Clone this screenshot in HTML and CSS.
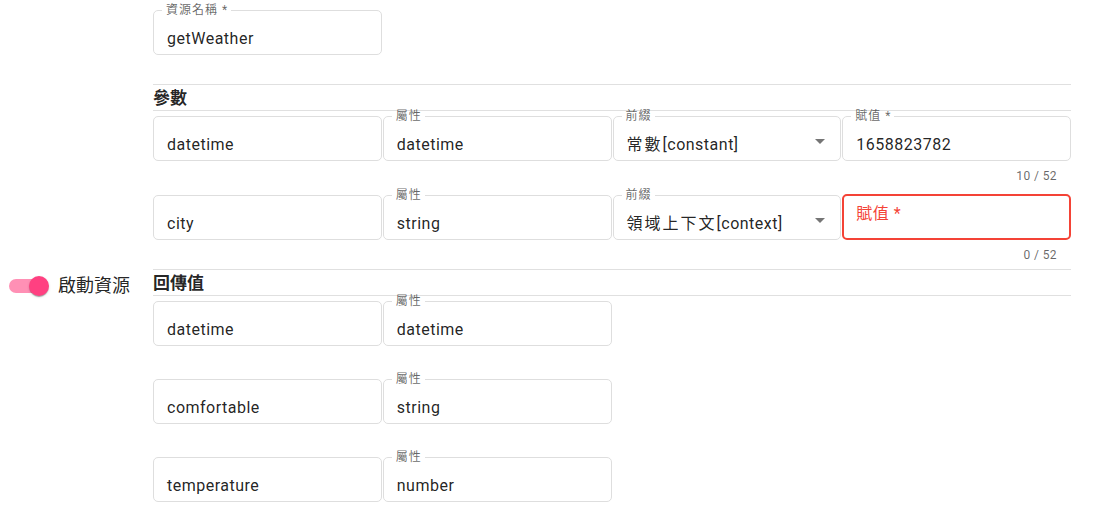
FILE: index.html
```html
<!DOCTYPE html>
<html lang="zh-Hant">
<head>
<meta charset="utf-8">
<title>資源</title>
<link rel="stylesheet" href="styles.css">
</head>
<body>
<div class="page">
  <aside class="side">
    <label class="toggle">
      <span class="switch"><span class="track"></span><span class="thumb"></span></span>
      <span class="toggle-label">啟動資源</span>
    </label>
  </aside>
  <main class="form">
    <div class="grid">
      <div class="field">
        <fieldset class="box"><legend>資源名稱 *</legend><div class="value">getWeather</div></fieldset>
      </div>
    </div>
    <hr class="divider">
    <h2 class="section">參數</h2>
    <div class="grid">
      <div class="field">
        <fieldset class="box"><legend class="none"></legend><div class="value">datetime</div></fieldset>
      </div>
      <div class="field">
        <fieldset class="box"><legend>屬性</legend><div class="value">datetime</div></fieldset>
      </div>
      <div class="field">
        <fieldset class="box"><legend>前綴</legend><div class="value select"><span><span class="cjk">常數</span>[constant]</span><span class="arrow"></span></div></fieldset>
      </div>
      <div class="field">
        <fieldset class="box"><legend>賦值 *</legend><div class="value">1658823782</div></fieldset>
        <div class="hint">10 / 52</div>
      </div>
      <div class="field">
        <fieldset class="box"><legend class="none"></legend><div class="value">city</div></fieldset>
      </div>
      <div class="field">
        <fieldset class="box"><legend>屬性</legend><div class="value">string</div></fieldset>
      </div>
      <div class="field">
        <fieldset class="box"><legend>前綴</legend><div class="value select"><span><span class="cjk">領域上下文</span>[context]</span><span class="arrow"></span></div></fieldset>
      </div>
      <div class="field">
        <fieldset class="box error"><legend class="none"></legend><div class="value placeholder">賦值 *</div></fieldset>
        <div class="hint">0 / 52</div>
      </div>
    </div>
    <hr class="divider">
    <h2 class="section">回傳值</h2>
    <div class="grid returns">
      <div class="field">
        <fieldset class="box"><legend class="none"></legend><div class="value">datetime</div></fieldset>
      </div>
      <div class="field">
        <fieldset class="box"><legend>屬性</legend><div class="value">datetime</div></fieldset>
      </div>
      <div class="field"></div>
      <div class="field"></div>
      <div class="field">
        <fieldset class="box"><legend class="none"></legend><div class="value">comfortable</div></fieldset>
      </div>
      <div class="field">
        <fieldset class="box"><legend>屬性</legend><div class="value">string</div></fieldset>
      </div>
      <div class="field"></div>
      <div class="field"></div>
      <div class="field">
        <fieldset class="box"><legend class="none"></legend><div class="value">temperature</div></fieldset>
      </div>
      <div class="field">
        <fieldset class="box"><legend>屬性</legend><div class="value">number</div></fieldset>
      </div>
    </div>
  </main>
</div>
</body>
</html>
```
FILE: styles.css
```css
html, body {
  margin: 0;
  background: #fff;
}

body {
  font-family: Roboto, "Noto Sans CJK TC", sans-serif;
  color: rgba(0, 0, 0, 0.87);
}

.page {
  display: flex;
  width: 1094px;
  height: 523px;
  overflow: hidden;
}

.side {
  flex: none;
  width: 153px;
  box-sizing: border-box;
  padding-top: 267px;
}

.toggle {
  display: flex;
  align-items: center;
}

.switch {
  position: relative;
  flex: none;
  width: 50px;
  height: 38px;
}

.track {
  position: absolute;
  left: 9px;
  top: 12px;
  width: 35px;
  height: 14px;
  border-radius: 7px;
  background: #ff90b5;
}

.thumb {
  position: absolute;
  left: 29px;
  top: 9px;
  width: 20px;
  height: 20px;
  border-radius: 50%;
  background: #ff4081;
  box-shadow: 0 2px 1px -1px rgba(0, 0, 0, 0.2), 0 1px 1px 0 rgba(0, 0, 0, 0.14), 0 1px 3px 0 rgba(0, 0, 0, 0.12);
}

.toggle-label {
  margin-left: 8px;
  font-size: 18px;
  line-height: 24px;
}

.form {
  flex: none;
  width: 918px;
  padding-top: 5px;
}

.grid {
  display: grid;
  grid-template-columns: repeat(4, 1fr);
  column-gap: 1px;
}

.field {
  height: 79px;
  min-width: 0;
}

.returns .field {
  height: 78px;
}

.box {
  margin: 0;
  min-width: 0;
  padding: 14px 14px 5px 13px;
  border: 1px solid #dedede;
  border-radius: 5px;
}

.box legend {
  height: 10px;
  line-height: 10px;
  font-size: 12px;
  letter-spacing: 1px;
  padding: 0 3px 0 4px;
  margin-left: -5px;
  color: rgba(0, 0, 0, 0.6);
}

.box legend.none {
  padding: 0;
  margin: 0;
}

.value {
  height: 20px;
  font-size: 16px;
  line-height: 20px;
  letter-spacing: 0.5px;
  white-space: nowrap;
}

.value .cjk {
  letter-spacing: 2px;
}

.value.select {
  display: flex;
  justify-content: space-between;
  align-items: center;
}

.arrow {
  width: 0;
  height: 0;
  border-left: 5px solid transparent;
  border-right: 5px solid transparent;
  border-top: 5px solid #757575;
  margin-right: 1px;
  margin-bottom: 8px;
}

.box.error {
  border: 2px solid #f44336;
  padding: 4px 13px 14px 12px;
}

.value.placeholder {
  color: #f44336;
}

.hint {
  padding: 7px 14px 0;
  font-size: 12px;
  line-height: 16px;
  letter-spacing: 0.4px;
  text-align: right;
  color: rgba(0, 0, 0, 0.6);
}

.divider {
  margin: 0;
  height: 0;
  border: 0;
  border-top: 1px solid #e0e0e0;
}

.section {
  margin: 0;
  padding-top: 2px;
  height: 23px;
  font-size: 17px;
  font-weight: 700;
  line-height: 23px;
  border-bottom: 1px solid #e0e0e0;
}
```
